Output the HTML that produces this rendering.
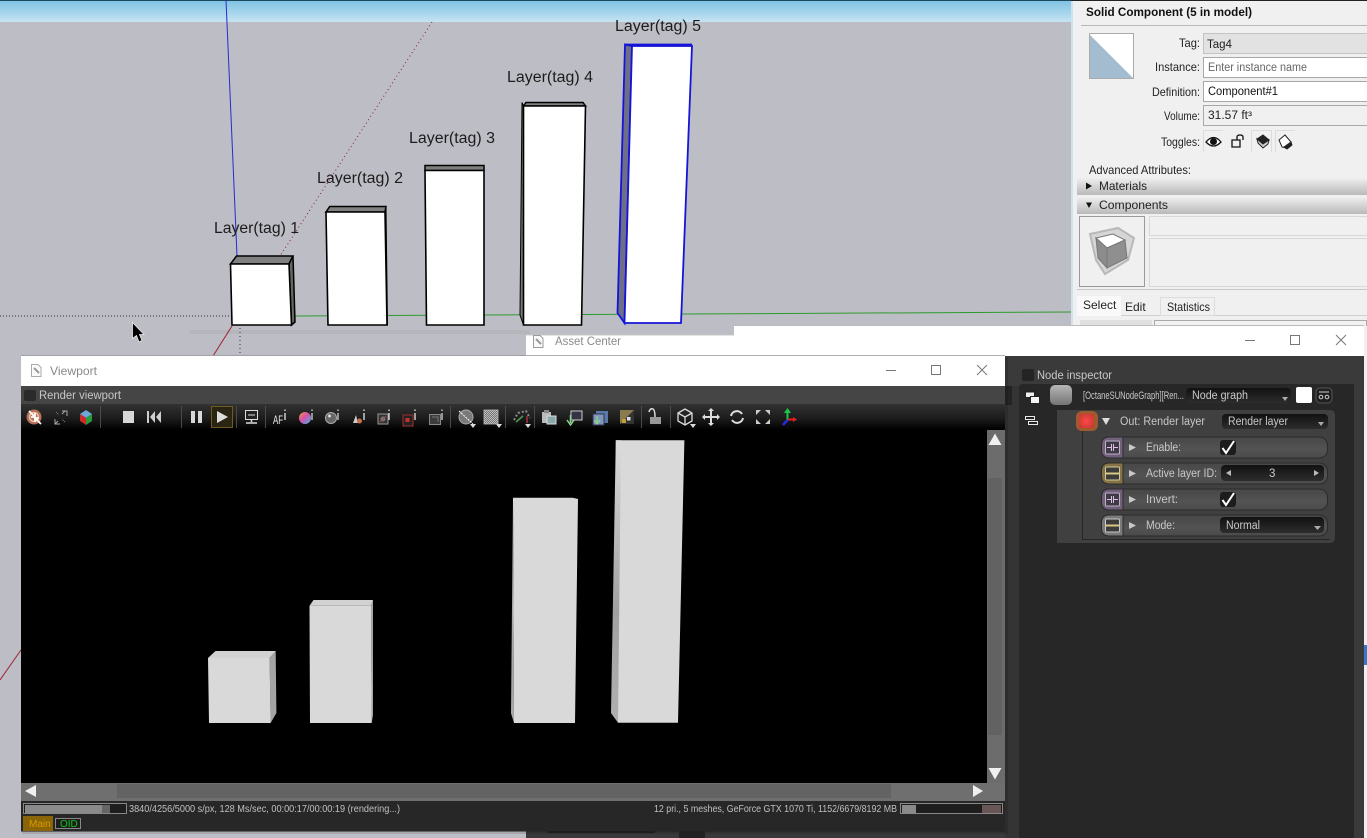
<!DOCTYPE html>
<html><head><meta charset="utf-8"><title>Octane Render Layers</title>
<style>
html,body{margin:0;padding:0;background:#bdbdc5;overflow:hidden}
svg{display:block;position:absolute;left:0;top:0}
text{font-family:"Liberation Sans",sans-serif;font-size:12px}
.lb{font-size:15.5px;fill:#1c1c1c}
.p{font-size:12px;fill:#222}
.d{font-size:11.5px;fill:#c8c8c8}
.s{font-size:10.5px;fill:#c0c0c0}
</style></head><body>
<svg width="1367" height="838" viewBox="0 0 1367 838" xmlns="http://www.w3.org/2000/svg">
<defs>
<linearGradient id="sky" x1="0" y1="0" x2="0" y2="1"><stop offset="0" stop-color="#7cc2e2"/><stop offset="1" stop-color="#c6e3f2"/></linearGradient>
<linearGradient id="bar" x1="0" y1="0" x2="0" y2="1"><stop offset="0" stop-color="#f2f2f2"/><stop offset="1" stop-color="#b9b9b9"/></linearGradient>
<linearGradient id="tb" x1="0" y1="0" x2="0" y2="1"><stop offset="0" stop-color="#323232"/><stop offset=".55" stop-color="#1c1c1c"/><stop offset="1" stop-color="#000"/></linearGradient>
<linearGradient id="row" x1="0" y1="0" x2="0" y2="1"><stop offset="0" stop-color="#474747"/><stop offset=".6" stop-color="#535353"/><stop offset="1" stop-color="#4b4b4b"/></linearGradient>
<linearGradient id="cb" x1="0" y1="0" x2="0" y2="1"><stop offset="0" stop-color="#111"/><stop offset="1" stop-color="#2d2d2d"/></linearGradient>
<linearGradient id="gs" x1="0" y1="0" x2="0" y2="1"><stop offset="0" stop-color="#b5b5b5"/><stop offset="1" stop-color="#757575"/></linearGradient>
<linearGradient id="side" x1="0" y1="0" x2="0" y2="1"><stop offset="0" stop-color="#dcdcdc"/><stop offset=".6" stop-color="#a0a0a0"/><stop offset="1" stop-color="#b0b0b0"/></linearGradient>
<radialGradient id="rd" cx=".5" cy=".5" r=".6"><stop offset="0" stop-color="#ff4848"/><stop offset="1" stop-color="#c83a30"/></radialGradient>
<pattern id="chk" width="2" height="2" patternUnits="userSpaceOnUse"><rect width="2" height="2" fill="#777"/><rect width="1" height="1" fill="#bbb"/><rect x="1" y="1" width="1" height="1" fill="#bbb"/></pattern>
<linearGradient id="wheel" x1="0" y1="0" x2="1" y2="1"><stop offset="0" stop-color="#e8a030"/><stop offset=".45" stop-color="#d850b0"/><stop offset="1" stop-color="#40b8e0"/></linearGradient>
</defs>

<!-- SketchUp scene -->
<rect width="1367" height="838" fill="#bdbdc5"/>
<rect width="1072" height="22" fill="url(#sky)"/>
<rect width="1072" height="1" fill="#1d4a5a"/>
<rect x="190" y="330" width="340" height="4" fill="#b5b5bc"/>
<path d="M226 0L237 256" stroke="#2a2ad0" stroke-width="1" fill="none"/>
<path d="M432 22L280 256" stroke="#8a2030" stroke-width="1" stroke-dasharray="1 3" fill="none"/>
<path d="M0 316H231" stroke="#333" stroke-width="1" stroke-dasharray="1 2" fill="none"/>
<path d="M295 316L1072 312" stroke="#2e9a2e" stroke-width="1" fill="none"/>
<path d="M232 326L213 356" stroke="#a02030" stroke-width="1" fill="none"/>
<path d="M240 328V356" stroke="#334" stroke-width="1" stroke-dasharray="1 3" fill="none"/>
<path d="M0 680L21 650" stroke="#a02030" stroke-width="1" fill="none"/>

<!-- Box 1 -->
<path d="M230.5 264L236.5 256H293L289 264Z" fill="#808080" stroke="#000" stroke-width="1.5"/>
<path d="M289 264L293 256L295 322L291.500 325Z" fill="#666" stroke="#000" stroke-width="1.5"/>
<path d="M230.5 264H289L291.500 325H232Z" fill="#fff" stroke="#000" stroke-width="1.600"/>
<!-- Box 2 -->
<path d="M326 212L329.700 206.500H386L385 212Z" fill="#808080" stroke="#000" stroke-width="1.500"/>
<path d="M385 212L386 206.500L387.500 325H385Z" fill="#555" stroke="#000" stroke-width="1"/>
<path d="M326 212H385L387 325H328Z" fill="#fff" stroke="#000" stroke-width="1.600"/>
<!-- Box 3 -->
<path d="M425 170.500V165.500H484V170.500Z" fill="#808080" stroke="#000" stroke-width="1.500"/>
<path d="M425 170.500H484V325H426.500Z" fill="#fff" stroke="#000" stroke-width="1.600"/>
<!-- Box 4 -->
<path d="M523.500 106L526 102.500H583L585.500 106Z" fill="#808080" stroke="#000" stroke-width="1.500"/>
<path d="M523.500 106L522 102.500L520 315L523.500 325Z" fill="#777" stroke="#000" stroke-width="1"/>
<path d="M523.500 106H585.500L581.500 325H523.500Z" fill="#fff" stroke="#000" stroke-width="1.600"/>
<!-- Box 5 -->
<path d="M632 46L625 44.500L617.500 313L624.500 323Z" fill="#6e6e88" stroke="#1515d8" stroke-width="1.800"/>
<path d="M625 44.500H692L632 46Z" fill="#808090" stroke="#1515d8" stroke-width="1.800"/>
<path d="M632 46H692L681 323H624.500Z" fill="#fff" stroke="#1515d8" stroke-width="1.800"/>

<text class="lb" x="214" y="233" textLength="85" lengthAdjust="spacingAndGlyphs">Layer(tag) 1</text>
<text class="lb" x="317" y="183" textLength="86" lengthAdjust="spacingAndGlyphs">Layer(tag) 2</text>
<text class="lb" x="409" y="143" textLength="86" lengthAdjust="spacingAndGlyphs">Layer(tag) 3</text>
<text class="lb" x="507" y="82" textLength="86" lengthAdjust="spacingAndGlyphs">Layer(tag) 4</text>
<text class="lb" x="615" y="31" textLength="86" lengthAdjust="spacingAndGlyphs">Layer(tag) 5</text>

<!-- cursor -->
<path d="M132.500 322.500V338.500L136.500 335.500L139 342L142 340.500L139.500 334.500H144Z" fill="#000" stroke="#e8e8e8" stroke-width=".8"/>

<!-- Right panel -->
<rect x="1071" y="0" width="296" height="838" fill="#f0f0f0"/>
<rect x="1071" y="0" width="2" height="330" fill="#cfe2ee"/>
<rect x="1071" y="0" width="296" height="1" fill="#222"/>
<text x="1086" y="16" font-weight="bold" style="font-size:12px;fill:#111" textLength="166" lengthAdjust="spacingAndGlyphs">Solid Component (5 in model)</text>
<rect x="1081" y="25" width="286" height="1" fill="#b8b8b8"/>
<rect x="1089.500" y="33.500" width="44" height="45" fill="#fff" stroke="#aaa"/>
<path d="M1090 35L1133 78H1090Z" fill="#a3bccf"/>
<text class="p" x="1179" y="47" textLength="21" lengthAdjust="spacingAndGlyphs">Tag:</text>
<text class="p" x="1155" y="71" textLength="45" lengthAdjust="spacingAndGlyphs">Instance:</text>
<text class="p" x="1152" y="96" textLength="48" lengthAdjust="spacingAndGlyphs">Definition:</text>
<text class="p" x="1164" y="120" textLength="36" lengthAdjust="spacingAndGlyphs">Volume:</text>
<text class="p" x="1161" y="146" textLength="39" lengthAdjust="spacingAndGlyphs">Toggles:</text>
<rect x="1203.500" y="33.500" width="170" height="20" fill="#e2e2e2" stroke="#c4c4c4"/>
<rect x="1203.500" y="57.500" width="170" height="20" fill="#fff" stroke="#a8a8a8"/>
<rect x="1203.500" y="81.500" width="170" height="20" fill="#fff" stroke="#a8a8a8"/>
<rect x="1203.500" y="105.500" width="170" height="20" fill="#f0f0f0" stroke="#a8a8a8"/>
<text x="1207" y="48" style="font-size:11.500px;fill:#222">Tag4</text>
<text x="1208" y="71" style="font-size:11.500px;fill:#666" textLength="99" lengthAdjust="spacingAndGlyphs">Enter instance name</text>
<text x="1208" y="95" style="font-size:11.500px;fill:#111" textLength="70" lengthAdjust="spacingAndGlyphs">Component#1</text>
<text x="1208" y="119" style="font-size:11.500px;fill:#222" textLength="44" lengthAdjust="spacingAndGlyphs">31.57 ft³</text>
<!-- toggles -->
<path d="M1203.500 152V130.500H1223M1251.500 152V130.500H1271.500V152M1275.500 152V130.500H1295" fill="none" stroke="#dcdcdc"/>
<path d="M1206 142Q1213.500 133 1221 142Q1213.500 150 1206 142Z" fill="#fff" stroke="#111" stroke-width="1.300"/>
<circle cx="1213.500" cy="141.500" r="3.500" fill="#111"/>
<path d="M1232 140H1240V147H1232Z M1237 140V137Q1237 135 1240 135Q1243 135 1243 137V140" fill="none" stroke="#111" stroke-width="1.300"/>
<path d="M1257 139L1263 135L1269 140L1263 144Z" fill="#222" stroke="#222"/>
<path d="M1257 139L1258 143L1263 148L1268 144L1269 140L1263 144Z" fill="#cfcfcf" stroke="#222"/>
<path d="M1279 140L1285 135L1291 142L1286 148L1282 147Z" fill="#fff" stroke="#222"/>
<path d="M1284 147L1291 142L1292 145L1287 149Z" fill="#222" stroke="#222"/>

<text class="p" x="1089" y="174" textLength="102" lengthAdjust="spacingAndGlyphs">Advanced Attributes:</text>
<rect x="1077" y="177" width="290" height="18" fill="url(#bar)"/>
<rect x="1077" y="196" width="290" height="18" fill="url(#bar)"/>
<path d="M1086 182.500L1092 186L1086 189.500Z" fill="#111"/>
<path d="M1086 202.500H1092L1089 208Z" fill="#111"/>
<text class="p" x="1099" y="190" textLength="48" lengthAdjust="spacingAndGlyphs">Materials</text>
<text class="p" x="1099" y="209" textLength="69" lengthAdjust="spacingAndGlyphs">Components</text>
<rect x="1079.500" y="216.500" width="65" height="70" fill="#f0f0f0" stroke="#9a9a9a"/>
<path d="M1090 234L1118 228L1134 238L1128 260L1105 274L1096 260Z" fill="#d6d6d6" stroke="#b8b8b8" stroke-width="2"/>
<path d="M1096 238L1113 234L1125 240L1107 248Z" fill="#fff" stroke="#777"/>
<path d="M1096 238L1107 248V268L1098 258Z" fill="#8c8c8c" stroke="#777"/>
<path d="M1107 248L1125 240L1127 258L1107 268Z" fill="#8f8f8f" stroke="#777"/>
<rect x="1149.500" y="216.500" width="220" height="19" fill="#f0f0f0" stroke="#d8d8d8"/>
<rect x="1149.500" y="238.500" width="220" height="48" fill="#f0f0f0" stroke="#d8d8d8"/>
<rect x="1077" y="289" width="290" height="1" fill="#c8c8c8"/>
<rect x="1077" y="315" width="290" height="1" fill="#d0d0d0"/>
<rect x="1077" y="296" width="44" height="20" fill="#f9f9f9"/>
<rect x="1160.500" y="297.500" width="54" height="18" fill="#f0f0f0" stroke="#dcdcdc"/>
<text class="p" x="1083" y="309">Select</text>
<text class="p" x="1125" y="311">Edit</text>
<text class="p" x="1167" y="311" textLength="43" lengthAdjust="spacingAndGlyphs">Statistics</text>
<rect x="1080" y="320" width="72" height="6" fill="#e0e0e0"/>
<rect x="1154.500" y="320.500" width="212" height="6" fill="#f2f2f2" stroke="#aaa"/>

<!-- Asset Center window -->
<rect x="734" y="325" width="630" height="32" fill="#fff"/>
<rect x="526" y="335" width="210" height="22" fill="#fff"/>
<rect x="734" y="325" width="630" height="1" fill="#bbb"/>
<path d="M526 335H734" stroke="#c8c8c8"/>
<rect x="526" y="356" width="838" height="482" fill="#3a3a3a"/>
<rect x="1005" y="386" width="14" height="452" fill="#343434"/>
<rect x="1005" y="386" width="7" height="19" fill="#242424"/>
<rect x="1364" y="326" width="3" height="512" fill="#f0f0f0"/>
<rect x="1364" y="645" width="3" height="20" fill="#3878c8"/>
<path d="M533.500 335.500H540L543 338.500V347.500H533.500Z" fill="#fafafa" stroke="#9a9a9a"/>
<path d="M536 339L541 344" stroke="#999" stroke-width="2"/>
<text x="555" y="345" style="font-size:12px;fill:#8a8a8a" textLength="66" lengthAdjust="spacingAndGlyphs">Asset Center</text>
<path d="M1245 340.500H1255" stroke="#777"/>
<rect x="1290.500" y="335.500" width="9" height="9" fill="none" stroke="#777"/>
<path d="M1336 335L1346 345M1346 335L1336 345" stroke="#777"/>

<!-- Node inspector -->
<rect x="1022" y="369" width="12" height="12" rx="2" fill="#242424"/>
<text class="d" x="1037" y="379" textLength="75" lengthAdjust="spacingAndGlyphs">Node inspector</text>
<path d="M1023 384H1354V838H1019V388Q1019 384 1023 384Z" fill="#272727"/>
<rect x="1025.500" y="390.500" width="9" height="7" fill="#eee" stroke="#222"/>
<rect x="1030.500" y="396.500" width="9" height="7" fill="#f4f4f4" stroke="#222"/>
<path d="M1025.500 390.500H1034.500V392.500H1025.500Z" fill="#222"/>
<rect x="1025.500" y="416.500" width="9" height="3" fill="#222" stroke="#e8e8e8"/>
<rect x="1028.500" y="421.500" width="9" height="3" fill="#222" stroke="#e8e8e8"/>
<rect x="1050" y="385" width="22" height="20" rx="5" fill="url(#gs)"/>
<text x="1083" y="399" style="font-size:11px;fill:#c8c8c8" textLength="101" lengthAdjust="spacingAndGlyphs">[OctaneSUNodeGraph][Ren...</text>
<rect x="1186" y="388" width="105" height="15" rx="4" fill="url(#cb)"/>
<text class="d" x="1192" y="399" textLength="56" lengthAdjust="spacingAndGlyphs">Node graph</text>
<path d="M1282 397H1288L1285 401Z" fill="#aaa"/>
<rect x="1296" y="387" width="16" height="16" rx="2" fill="#fff"/>
<rect x="1316" y="388" width="16" height="15" rx="4" fill="#202020" stroke="#555"/>
<path d="M1319 392H1329" stroke="#ccc"/><circle cx="1321" cy="397" r="1.800" fill="none" stroke="#ccc"/><circle cx="1327" cy="397" r="1.800" fill="none" stroke="#ccc"/>

<path d="M1057 410H1329Q1335 410 1335 416V537Q1335 543 1329 543H1057Z" fill="#404040"/>
<path d="M1082.500 430V539.500H1330" stroke="#262626" fill="none"/>
<rect x="1076" y="411" width="22" height="20" rx="6" fill="#a05a30"/>
<rect x="1079" y="414" width="15" height="14" rx="2" fill="url(#rd)"/>
<path d="M1102 418H1110L1106 425Z" fill="#ddd"/>
<text class="d" x="1120" y="425" textLength="85" lengthAdjust="spacingAndGlyphs">Out: Render layer</text>
<rect x="1222" y="414" width="106" height="15" rx="4" fill="url(#cb)"/>
<text class="d" x="1228" y="425" textLength="60" lengthAdjust="spacingAndGlyphs">Render layer</text>
<path d="M1318 422H1324L1321 426Z" fill="#aaa"/>

<g>
<rect x="1101.500" y="437" width="226" height="21" rx="8" fill="url(#row)" stroke="#2b2b2b"/>
<rect x="1101.500" y="463" width="226" height="21" rx="8" fill="url(#row)" stroke="#2b2b2b"/>
<rect x="1101.500" y="489" width="226" height="21" rx="8" fill="url(#row)" stroke="#2b2b2b"/>
<rect x="1101.500" y="515" width="226" height="21" rx="8" fill="url(#row)" stroke="#2b2b2b"/>
<path d="M1123 437H1109.500Q1101.500 437 1101.500 445V450Q1101.500 458 1109.500 458H1123Z" fill="#71607a" stroke="#2b2b2b"/>
<path d="M1123 463H1109.500Q1101.500 463 1101.500 471V476Q1101.500 484 1109.500 484H1123Z" fill="#857345" stroke="#2b2b2b"/>
<path d="M1123 489H1109.500Q1101.500 489 1101.500 497V502Q1101.500 510 1109.500 510H1123Z" fill="#71607a" stroke="#2b2b2b"/>
<path d="M1123 515H1109.500Q1101.500 515 1101.500 523V528Q1101.500 536 1109.500 536H1123Z" fill="#7a7a7a" stroke="#2b2b2b"/>
<rect x="1105.500" y="441" width="14" height="13" rx="1" fill="#3e3a46" stroke="#c0b0c8"/>
<rect x="1105.500" y="467" width="14" height="13" rx="1" fill="#3c3c38" stroke="#cfc8a0"/>
<rect x="1105.500" y="493" width="14" height="13" rx="1" fill="#3e3a46" stroke="#c0b0c8"/>
<rect x="1105.500" y="519" width="14" height="13" rx="1" fill="#3c3c3c" stroke="#c8c8c8"/>
<path d="M1107 447.500H1111M1114 447.500H1118M1111.500 444V451M1113.500 444V451" stroke="#e0c0e8"/>
<path d="M1107 499.500H1111M1114 499.500H1118M1111.500 496V503M1113.500 496V503" stroke="#e0c0e8"/>
<path d="M1106 473.500H1119" stroke="#d8c880" stroke-width="2"/>
<path d="M1106 525.500H1119" stroke="#d8c880" stroke-width="2"/>
<path d="M1129 444L1136 447.500L1129 451ZM1129 470L1136 473.500L1129 477ZM1129 496L1136 499.500L1129 503ZM1129 522L1136 525.500L1129 529Z" fill="#c8c8c8"/>
<text class="d" x="1146" y="451" textLength="35" lengthAdjust="spacingAndGlyphs">Enable:</text>
<text class="d" x="1146" y="477" textLength="71" lengthAdjust="spacingAndGlyphs">Active layer ID:</text>
<text class="d" x="1146" y="503" textLength="32" lengthAdjust="spacingAndGlyphs">Invert:</text>
<text class="d" x="1146" y="529" textLength="29" lengthAdjust="spacingAndGlyphs">Mode:</text>
<rect x="1220" y="440" width="16" height="15" rx="3" fill="#1c1c1c"/>
<path d="M1222.500 448L1226 453L1234 441" fill="none" stroke="#fff" stroke-width="2"/>
<rect x="1220" y="492" width="16" height="15" rx="3" fill="#1c1c1c"/>
<path d="M1222.500 500L1226 505L1234 493" fill="none" stroke="#fff" stroke-width="2"/>
<rect x="1221" y="465" width="103" height="16" rx="4" fill="url(#cb)"/>
<path d="M1231 470V476L1226 473ZM1314 470V476L1319 473Z" fill="#bbb"/>
<text class="d" x="1269" y="477">3</text>
<rect x="1220" y="517" width="104" height="16" rx="4" fill="url(#cb)"/>
<text class="d" x="1226" y="529" textLength="34" lengthAdjust="spacingAndGlyphs">Normal</text>
<path d="M1314 526H1321L1317.500 530Z" fill="#aaa"/>
</g>

<!-- Viewport window -->
<rect x="22" y="358" width="986" height="476" fill="#000" opacity=".12"/>
<rect x="21" y="355.500" width="984" height="476" fill="#222"/>
<rect x="21" y="355.500" width="984" height="31" fill="#fff"/>
<rect x="21" y="355" width="505" height="1" fill="#a0a0a6"/>
<rect x="526" y="355" width="479" height="1" fill="#b0b0b0"/>
<path d="M31.500 364.500H38L41 367.500V376.500H31.500Z" fill="#fafafa" stroke="#aaa"/>
<path d="M34 368L39 373" stroke="#999" stroke-width="2"/>
<text x="50" y="375" style="font-size:12px;fill:#888" textLength="47" lengthAdjust="spacingAndGlyphs">Viewport</text>
<path d="M886 370.500H896" stroke="#777"/>
<rect x="931.500" y="365.500" width="9" height="9" fill="none" stroke="#777"/>
<path d="M977 365L987 375M987 365L977 375" stroke="#777"/>
<rect x="21" y="386" width="984" height="18" fill="#454545"/>
<rect x="24" y="390" width="12" height="11" rx="2" fill="#2a2a2a"/>
<text class="d" x="39" y="399" textLength="82" lengthAdjust="spacingAndGlyphs">Render viewport</text>
<rect x="21" y="404" width="984" height="26" fill="url(#tb)"/>
<rect x="21" y="430" width="966" height="353" fill="#000"/>

<!-- toolbar -->
<g stroke="#4a4a4a" stroke-width="1"><path d="M100.500 406V428M181.500 406V428M236.500 406V428M265.500 406V428M450.500 406V428M505.500 406V428M534.500 406V428M641.500 406V428M670.500 406V428"/></g>
<circle cx="34" cy="417" r="7.500" fill="#b87058"/><circle cx="34" cy="417" r="4.500" fill="none" stroke="#e8c0a8" stroke-width="1.500"/>
<path d="M29 411L35 417M35 413V417H31" stroke="#fff" stroke-width="1.800" fill="none"/><path d="M41 424L35 418M35 422V418H39" stroke="#fff" stroke-width="1.800" fill="none"/>
<path d="M62 411H67V416M65 411L62 414M55 419V424H60M55 424L58 421" fill="none" stroke="#aaa"/><path d="M56 412L59 415M65 422L62 419" stroke="#888" stroke-dasharray="1 1"/>
<path d="M80 414L86 410L92 414L86 418Z" fill="#6aa8d8"/><path d="M80 414L86 418V425L80 421Z" fill="#d02828"/><path d="M92 414L86 418V425L92 421Z" fill="#2a9a3a"/>
<rect x="123" y="411" width="11" height="12" fill="#d8d8d8"/>
<path d="M147 411H149V423H147ZM155 411V423L150 417ZM161 411V423L156 417Z" fill="#cfcfcf"/>
<path d="M191 411H195V423H191ZM198 411H202V423H198Z" fill="#d8d8d8"/>
<rect x="211.500" y="406.500" width="21" height="21" fill="#2a2412" stroke="#6f5a20"/>
<path d="M217 411V423L228 417Z" fill="#ddd"/>
<rect x="245.500" y="410.500" width="12" height="9" fill="#222" stroke="#ddd"/><path d="M248 415H255" stroke="#ddd"/><path d="M251.500 420V422M246 423H257" stroke="#ddd" stroke-width="1.500"/>
<text x="273" y="424" style="font-size:12px;fill:#eee" textLength="10" lengthAdjust="spacingAndGlyphs">AF</text><path d="M285 413V420" stroke="#ccc" stroke-width="1.500"/><path d="M285 409.500V411" stroke="#ccc" stroke-width="1.500"/>
<circle cx="305" cy="418" r="6" fill="url(#wheel)"/><path d="M312 413V420M312 409.500V411" stroke="#bbb" stroke-width="1.500"/>
<circle cx="331" cy="418" r="5.500" fill="#666" stroke="#aaa"/><circle cx="329.500" cy="416" r="1.500" fill="#ddd"/><path d="M338 413V420M338 409.500V411" stroke="#bbb" stroke-width="1.500"/>
<path d="M353 423L356 415L358 423Z" fill="#ccc"/><circle cx="359.500" cy="421" r="2.500" fill="#c87050"/><path d="M364 413V420M364 409.500V411" stroke="#ccc" stroke-width="1.500"/>
<rect x="378" y="414" width="10" height="10" fill="#333" stroke="#999"/><circle cx="383" cy="419" r="2.500" fill="#777"/><path d="M380 422L386 416" stroke="#a05050"/><path d="M389 413V420M389 409.500V411" stroke="#ccc" stroke-width="1.500"/>
<rect x="403" y="415" width="10" height="11" fill="#222" stroke="#a03030"/><rect x="405.500" y="418" width="4" height="4" fill="#c83030"/><path d="M415 413V420M415 409.500V411" stroke="#ccc" stroke-width="1.500"/>
<rect x="429.500" y="414.500" width="11" height="10" fill="#3c3c3c" stroke="#888"/><path d="M432 417H438V422" fill="none" stroke="#777"/><path d="M442 413V420M442 409.500V411" stroke="#bbb" stroke-width="1.500"/>
<circle cx="466" cy="417" r="7" fill="#7a7a7a" stroke="#aaa"/><path d="M459 411L473 424" stroke="#fff" stroke-dasharray="2 1"/><path d="M470 424H476L473 428Z" fill="#ddd"/>
<rect x="484" y="410" width="14" height="14" fill="url(#chk)" stroke="#bbb" stroke-width=".8"/><path d="M496 424H502L499 428Z" fill="#ddd"/>
<path d="M514 420L518 413L526 411L530 418" fill="none" stroke="#888" stroke-dasharray="2 2" stroke-width="2"/><path d="M516 422L523 416" stroke="#4a9a4a" stroke-width="1.500"/><path d="M527 416V423" stroke="#803030" stroke-width="2"/><path d="M525 424H531L528 428Z" fill="#ddd"/>
<rect x="542" y="412" width="9" height="11" fill="#bbb"/><rect x="547" y="416" width="9" height="8" fill="#8aa" stroke="#ddd"/><path d="M544 410H549V413H544Z" fill="#888"/>
<rect x="571" y="411" width="11" height="9" fill="#334" stroke="#ccc"/><path d="M570.500 415V423M567 420L570.500 425L574 420" stroke="#90d890" fill="none" stroke-width="1.500"/>
<rect x="596" y="411" width="12" height="12" fill="#5a78a8"/><rect x="593" y="414" width="11" height="11" fill="#7f98b8" stroke="#335"/><path d="M597 416V422M594.500 420L597 424L600 420" stroke="#90d890" fill="none" stroke-width="1.200"/>
<rect x="620" y="410" width="14" height="14" fill="#8a7a50"/><path d="M620 424L634 410V424Z" fill="#333"/><rect x="627" y="417" width="3.500" height="3.500" fill="#ddd"/><rect x="622" y="419" width="4" height="4" fill="#c0a030"/>
<rect x="650" y="417" width="11" height="7" fill="#999"/><path d="M649 412Q650 408 653 409Q655 410 655 417" fill="none" stroke="#ddd" stroke-width="1.500"/>
<path d="M678 413L685 409L692 413V421L685 425L678 421ZM678 413L685 417L692 413M685 417V425" fill="none" stroke="#ddd" stroke-width="1.300"/><path d="M690 424H696L693 428Z" fill="#ddd"/>
<path d="M711 409V425M703 417H719" stroke="#ddd" stroke-width="2"/><path d="M711 408L708 411H714ZM711 426L708 423H714ZM702 417L705 414V420ZM720 417L717 414V420Z" fill="#ddd"/>
<path d="M731 416A6 6 0 0 1 742 414M743 418A6 6 0 0 1 732 420" fill="none" stroke="#ddd" stroke-width="2"/>
<path d="M756 410H761L756 415ZM770 410H765L770 415ZM756 424H761L756 419ZM770 424H765L770 419Z" fill="#ccc"/>
<path d="M787.500 420V411" stroke="#18c848" stroke-width="2"/><path d="M787.500 408L784 413H791Z" fill="#18c848"/>
<path d="M787.500 419.500H796" stroke="#e02020" stroke-width="2"/><path d="M797 419.500L793 417V422Z" fill="#e02020"/>
<path d="M787.500 420L783 425" stroke="#2030e0" stroke-width="2.500"/>

<!-- Render -->
<path d="M208 658L215.500 651H275.700L269.600 658Z" fill="#d2d2d2"/>
<path d="M269.600 658L275.700 651L276.400 713L270.600 723Z" fill="#a4a4a4"/>
<path d="M208 658H269.600L270.600 723H209Z" fill="#d9d9d9"/>
<path d="M309.500 605.700L313.500 600H373L371 605.700Z" fill="#d2d2d2"/>
<path d="M371 605.700L373 600V715L371.700 723Z" fill="#a8a8a8"/>
<path d="M309.500 605.700H371L371.700 723H310Z" fill="#d9d9d9"/>
<path d="M513 497.700H572.800L578 499L575 723H514Z" fill="#d9d9d9"/>
<path d="M513 497.700L514 723L511 713.300Z" fill="#a8a8a8"/>
<path d="M615.800 440.300H684.400L678 722.700H618Z" fill="#d9d9d9"/>
<path d="M615.800 440.300L621 440.300L618 722.700L611 713Z" fill="url(#side)"/>

<!-- scrollbars -->
<rect x="987" y="430" width="18" height="371" fill="#6c6c6c"/>
<rect x="988" y="478" width="14" height="257" fill="#626262"/>
<path d="M988.500 445L995 433.500L1001.500 445Z" fill="#f0f0f0"/>
<path d="M988.500 768L995 779.500L1001.500 768Z" fill="#f0f0f0"/>
<rect x="21" y="783" width="984" height="18" fill="#6f6f6f"/>
<rect x="117" y="784" width="774" height="14" fill="#636363"/>
<path d="M36 785V797L25 791Z" fill="#f0f0f0"/>
<path d="M973 785V797L983 791Z" fill="#f0f0f0"/>

<!-- status -->
<rect x="21" y="801" width="984" height="30" fill="#272727"/>
<rect x="23.500" y="803.500" width="103" height="10" fill="#1e1e1e" stroke="#888"/>
<rect x="25" y="805" width="77" height="8" fill="#8a8a8a"/><rect x="102" y="805" width="8" height="8" fill="#666"/>
<text class="s" x="129" y="812" textLength="271" lengthAdjust="spacingAndGlyphs">3840/4256/5000 s/px, 128 Ms/sec, 00:00:17/00:00:19 (rendering...)</text>
<text class="s" x="654" y="812" textLength="243" lengthAdjust="spacingAndGlyphs">12 pri., 5 meshes, GeForce GTX 1070 Ti, 1152/6679/8192 MB</text>
<rect x="900.500" y="803.500" width="102" height="10" fill="#1e1e1e" stroke="#888"/>
<rect x="902" y="805" width="14" height="8" fill="#8a8a8a"/><rect x="982" y="805" width="19" height="8" fill="#6a5656"/>
<rect x="23" y="816" width="30" height="15" fill="#8a6508"/>
<text x="29" y="827" style="font-size:10px;fill:#d89a00">Main</text>
<rect x="55.500" y="818.500" width="25" height="10" fill="#1e1e1e" stroke="#888"/>
<text x="60" y="827" style="font-size:10px;fill:#10c818">OID</text>
<rect x="548" y="831" width="107" height="2" fill="#1e1e1e"/>
<rect x="679" y="831" width="26" height="7" fill="#222"/>
</svg>
</body></html>
